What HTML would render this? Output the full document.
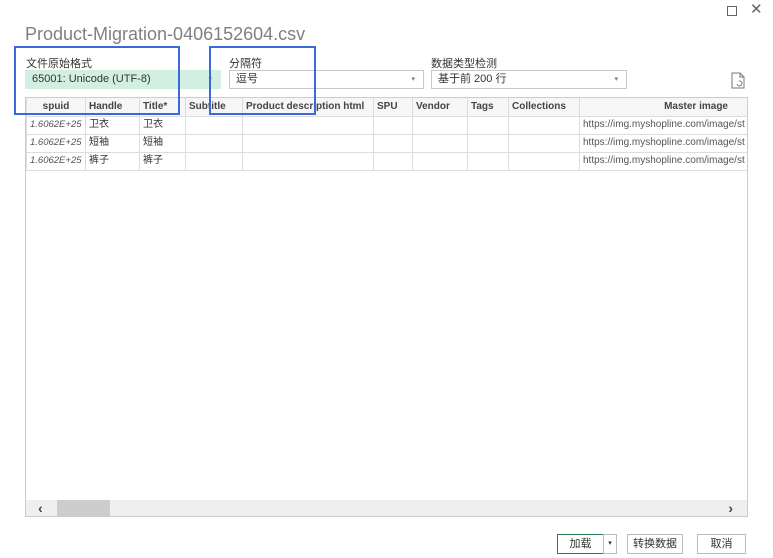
<!DOCTYPE html>
<html><head><meta charset="utf-8"><style>
*{box-sizing:border-box;margin:0;padding:0}
body{width:773px;height:558px;background:#fff;position:relative;overflow:hidden;font-family:"Liberation Sans","Noto Sans CJK SC",sans-serif;color:#333}
.a{position:absolute}
.title{left:25px;top:24px;font-size:18px;color:#808080}
.lbl{font-size:11px;color:#333}
.sel{height:19px;border:1px solid #c8c8c8;font-size:11px;line-height:17px;padding-left:6px;background:#fff}
.sel i{position:absolute;right:8px;top:0;font-style:normal;font-size:7px;color:#777}
table{border-collapse:collapse;font-size:10px;table-layout:fixed}
td,th{border:1px solid #ddd;height:18px;line-height:16px;padding:0 3px;white-space:nowrap;overflow:hidden;text-align:left;vertical-align:middle}
th{font-weight:bold;color:#444;background:#f6f6f6;border-top:none}
td.n{font-style:italic;color:#555;font-size:9.5px}
.box{border:2.5px solid #3b6ad8}
.btn{height:20px;border:1px solid #bbb;font-size:11px;text-align:center;line-height:18px;background:#fff}
</style></head><body>
<div class="a" style="left:727px;top:6px;width:10px;height:10px;border:1px solid #666"></div>
<div class="a" style="left:750px;top:0px;font-size:15px;color:#666">✕</div>
<div class="a title">Product-Migration-0406152604.csv</div>
<div class="a lbl" style="left:26px;top:55px">文件原始格式</div>
<div class="a lbl" style="left:229px;top:55px">分隔符</div>
<div class="a lbl" style="left:431px;top:55px">数据类型检测</div>
<div class="a sel" style="left:25px;top:70px;width:196px;background:#d3efe2;border-color:#d3efe2;color:#333">65001: Unicode (UTF-8)<i>▾</i></div>
<div class="a sel" style="left:229px;top:70px;width:195px">逗号<i>▾</i></div>
<div class="a sel" style="left:431px;top:70px;width:196px">基于前 200 行<i>▾</i></div>
<svg class="a" style="left:731px;top:72px" width="14" height="17" viewBox="0 0 14 17"><path d="M1 1h8l4 4v11H1z M9 1v4h4" fill="none" stroke="#777"/><path d="M6 12a2.5 2.5 0 1 0 2-3" fill="none" stroke="#777"/></svg>
<div class="a" style="left:25px;top:97px;width:723px;height:420px;border:1px solid #ccc;overflow:hidden">
<table style="width:722px">
<colgroup><col style="width:59px"><col style="width:54px"><col style="width:46px"><col style="width:57px"><col style="width:131px"><col style="width:39px"><col style="width:55px"><col style="width:41px"><col style="width:71px"><col style="width:169px"></colgroup>
<tr><th style="text-align:center">spuid</th><th>Handle</th><th>Title*</th><th>Subtitle</th><th>Product description html</th><th>SPU</th><th>Vendor</th><th>Tags</th><th>Collections</th><th style="text-align:right;padding-right:20px">Master image</th></tr>
<tr><td class="n">1.6062E+25</td><td>卫衣</td><td>卫衣</td><td></td><td></td><td></td><td></td><td></td><td></td><td style="color:#555">https://img.myshopline.com/image/st</td></tr>
<tr><td class="n">1.6062E+25</td><td>短袖</td><td>短袖</td><td></td><td></td><td></td><td></td><td></td><td></td><td style="color:#555">https://img.myshopline.com/image/st</td></tr>
<tr><td class="n">1.6062E+25</td><td>裤子</td><td>裤子</td><td></td><td></td><td></td><td></td><td></td><td></td><td style="color:#555">https://img.myshopline.com/image/st</td></tr>
</table>
<div class="a" style="left:0;bottom:0;width:721px;height:16px;background:#efefef"></div>
<div class="a" style="left:31px;bottom:0;width:53px;height:16px;background:#cdcdcd"></div>
<div class="a" style="left:12px;bottom:0px;font-size:14px;font-weight:bold;color:#444">‹</div>
<div class="a" style="right:14px;bottom:0px;font-size:14px;font-weight:bold;color:#444">›</div>
</div>
<div class="a box" style="left:14px;top:46px;width:166px;height:69px"></div>
<div class="a box" style="left:209px;top:46px;width:107px;height:69px"></div>
<div class="a btn" style="left:557px;top:534px;width:47px;border-color:#2f7d55">加载</div>
<div class="a btn" style="left:603px;top:534px;width:14px;font-size:7px">▾</div>
<div class="a btn" style="left:627px;top:534px;width:56px">转换数据</div>
<div class="a btn" style="left:697px;top:534px;width:49px">取消</div>
</body></html>
